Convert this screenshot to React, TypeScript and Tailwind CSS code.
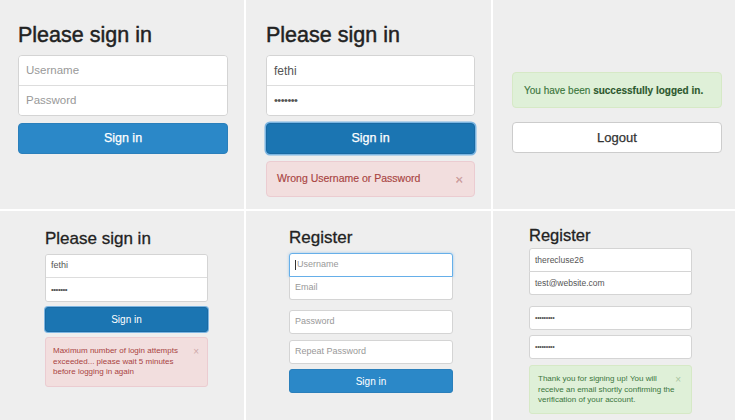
import type { ReactNode } from "react";

// small helpers for the bootstrap-ish sign in shots
function Field(props: { children?: ReactNode; className?: string; muted?: boolean }) {
  return (
    <div
      className={`flex items-center bg-white ${props.muted ? "text-[#999]" : "text-[#555]"} ${props.className ?? ""}`}
    >
      {props.children}
    </div>
  );
}

function Close(props: { className?: string }) {
  return <span className={`absolute leading-none ${props.className ?? ""}`}>×</span>;
}

export default function App() {
  return (
    <div className="grid h-[420px] w-[735px] grid-cols-[244px_245px_1fr] grid-rows-[209px_1fr] gap-[2px] overflow-hidden bg-white font-['Liberation_Sans',Arial,sans-serif]">
      {/* top left - empty sign in */}
      <div className="bg-[#eee] pl-[18px] pt-[22px]">
        <div className="w-[210px]">
          <h2 className="h-[26px] text-[21.5px] leading-[26px] text-[#222] [-webkit-text-stroke:0.45px_#222]">Please sign in</h2>
          <div className="mt-[7px] overflow-hidden rounded-[4px] border border-[#d4d4d4]">
            <Field muted className="h-[30px] border-b border-[#ddd] px-[7px] text-[11.5px]">Username</Field>
            <Field muted className="h-[29px] px-[7px] text-[11.5px]">Password</Field>
          </div>
          <div className="mt-[7px] flex h-[31px] items-center justify-center rounded-[4px] border border-[#2a7fbb] bg-[#2b88c8] text-[12.5px] text-white [-webkit-text-stroke:0.25px_#fff]">
            Sign in
          </div>
        </div>
      </div>

      {/* top middle - wrong password */}
      <div className="bg-[#eee] pl-[20px] pt-[22px]">
        <div className="w-[209px]">
          <h2 className="h-[26px] text-[21.5px] leading-[26px] text-[#222] [-webkit-text-stroke:0.45px_#222]">Please sign in</h2>
          <div className="mt-[7px] overflow-hidden rounded-[4px] border border-[#d4d4d4]">
            <Field className="h-[30px] border-b border-[#ddd] px-[7px] text-[12px]">fethi</Field>
            <Field className="h-[29px] px-[7px] text-[11px] tracking-[-0.5px]">•••••••</Field>
          </div>
          <div className="mt-[7px] flex h-[31px] items-center justify-center rounded-[4px] border border-[#1a6aa3] bg-[#1b75b2] text-[12.5px] text-white shadow-[0_0_0_1.5px_#7db6e2] [-webkit-text-stroke:0.25px_#fff]">
            Sign in
          </div>
          <div className="relative mt-[7px] flex h-[36px] items-center rounded-[4px] border border-[#ebccd1] bg-[#f2dede] pl-[10px] text-[10.5px] text-[#a94442] [-webkit-text-stroke:0.15px_#a94442]">
            Wrong Username or Password
            <Close className="right-[11px] top-[11px] text-[13px] text-[#cfa9a9]" />
          </div>
        </div>
      </div>

      {/* top right - logged in */}
      <div className="bg-[#eee] pl-[19px] pt-[72px]">
        <div className="w-[210px]">
          <div className="flex h-[36px] items-center rounded-[4px] border border-[#d6e9c6] bg-[#dff0d8] pl-[11px] text-[10px] text-[#3c763d] [-webkit-text-stroke:0.15px_#3c763d]">
            You have been&nbsp;<b className="text-[#2b542c]">successfully logged in.</b>
          </div>
          <div className="mt-[14px] flex h-[31px] items-center justify-center rounded-[4px] border border-[#ccc] bg-white text-[13px] text-[#333] [-webkit-text-stroke:0.25px_#333]">
            Logout
          </div>
        </div>
      </div>

      {/* bottom left - too many attempts */}
      <div className="bg-[#eee] pl-[45px] pt-[18px]">
        <div className="w-[163px]">
          <h2 className="h-[20px] text-[17px] leading-[20px] text-[#222] [-webkit-text-stroke:0.3px_#222]">Please sign in</h2>
          <div className="mt-[5px] overflow-hidden rounded-[3px] border border-[#d4d4d4]">
            <Field className="h-[23px] border-b border-[#ddd] px-[5px] text-[9px]">fethi</Field>
            <Field className="h-[23px] px-[5px] text-[8px] tracking-[-0.5px]">•••••••</Field>
          </div>
          <div className="mt-[5px] flex h-[25px] items-center justify-center rounded-[3px] border border-[#1a6aa3] bg-[#1b75b2] text-[10px] text-white shadow-[0_0_0_1px_#7db6e2]">
            Sign in
          </div>
          <div className="relative mt-[5px] h-[50px] rounded-[3px] border border-[#ebccd1] bg-[#f2dede] pl-[7px] pt-[8px] text-[8px] leading-[10.7px] text-[#a94442]">
            Maximum number of login attempts
            <br />
            exceeded... please wait 5 minutes
            <br />
            before logging in again
            <Close className="right-[8px] top-[9px] text-[10px] text-[#cfa9a9]" />
          </div>
        </div>
      </div>

      {/* bottom middle - register empty */}
      <div className="bg-[#eee] pl-[43px] pt-[17px]">
        <div className="w-[164px]">
          <h2 className="h-[20px] text-[17px] leading-[20px] text-[#222] [-webkit-text-stroke:0.3px_#222]">Register</h2>
          <Field muted className="mt-[5px] h-[24px] rounded-t-[3px] border border-[#66afe9] px-[5px] text-[9px] shadow-[0_0_3px_rgba(102,175,233,0.6)]">
            <span className="mr-[1px] h-[10px] w-px bg-[#333]" />
            Username
          </Field>
          <Field muted className="h-[23px] rounded-b-[3px] border border-t-0 border-[#d4d4d4] px-[5px] text-[9px]">
            Email
          </Field>
          <Field muted className="mt-[10px] h-[24px] rounded-[3px] border border-[#d4d4d4] px-[5px] text-[9px]">
            Password
          </Field>
          <Field muted className="mt-[6px] h-[24px] rounded-[3px] border border-[#d4d4d4] px-[5px] text-[9px]">
            Repeat Password
          </Field>
          <div className="mt-[5px] flex h-[24px] items-center justify-center rounded-[3px] border border-[#2a7fbb] bg-[#2b88c8] text-[10px] text-white">
            Sign in
          </div>
        </div>
      </div>

      {/* bottom right - registered */}
      <div className="bg-[#eee] pl-[36px] pt-[14px]">
        <div className="w-[163px]">
          <h2 className="h-[20px] text-[16.5px] leading-[20px] text-[#222] [-webkit-text-stroke:0.3px_#222]">Register</h2>
          <Field className="mt-[3px] h-[24px] rounded-t-[3px] border border-[#d4d4d4] px-[5px] text-[8.5px]">
            therecluse26
          </Field>
          <Field className="h-[23px] rounded-b-[3px] border border-t-0 border-[#d4d4d4] px-[5px] text-[8.5px]">
            test@website.com
          </Field>
          <Field className="mt-[11px] h-[24px] rounded-[3px] border border-[#d4d4d4] px-[5px] text-[7px] tracking-[-0.3px]">
            •••••••••
          </Field>
          <Field className="mt-[5px] h-[24px] rounded-[3px] border border-[#d4d4d4] px-[5px] text-[7px] tracking-[-0.3px]">
            •••••••••
          </Field>
          <div className="relative mt-[6px] h-[49px] rounded-[3px] border border-[#d6e9c6] bg-[#dff0d8] pl-[8px] pt-[8px] text-[8px] leading-[10.5px] text-[#3c763d]">
            Thank you for signing up! You will
            <br />
            receive an email shortly confirming the
            <br />
            verification of your account.
            <Close className="right-[10px] top-[9px] text-[10px] text-[#a9c4a0]" />
          </div>
        </div>
      </div>
    </div>
  );
}
